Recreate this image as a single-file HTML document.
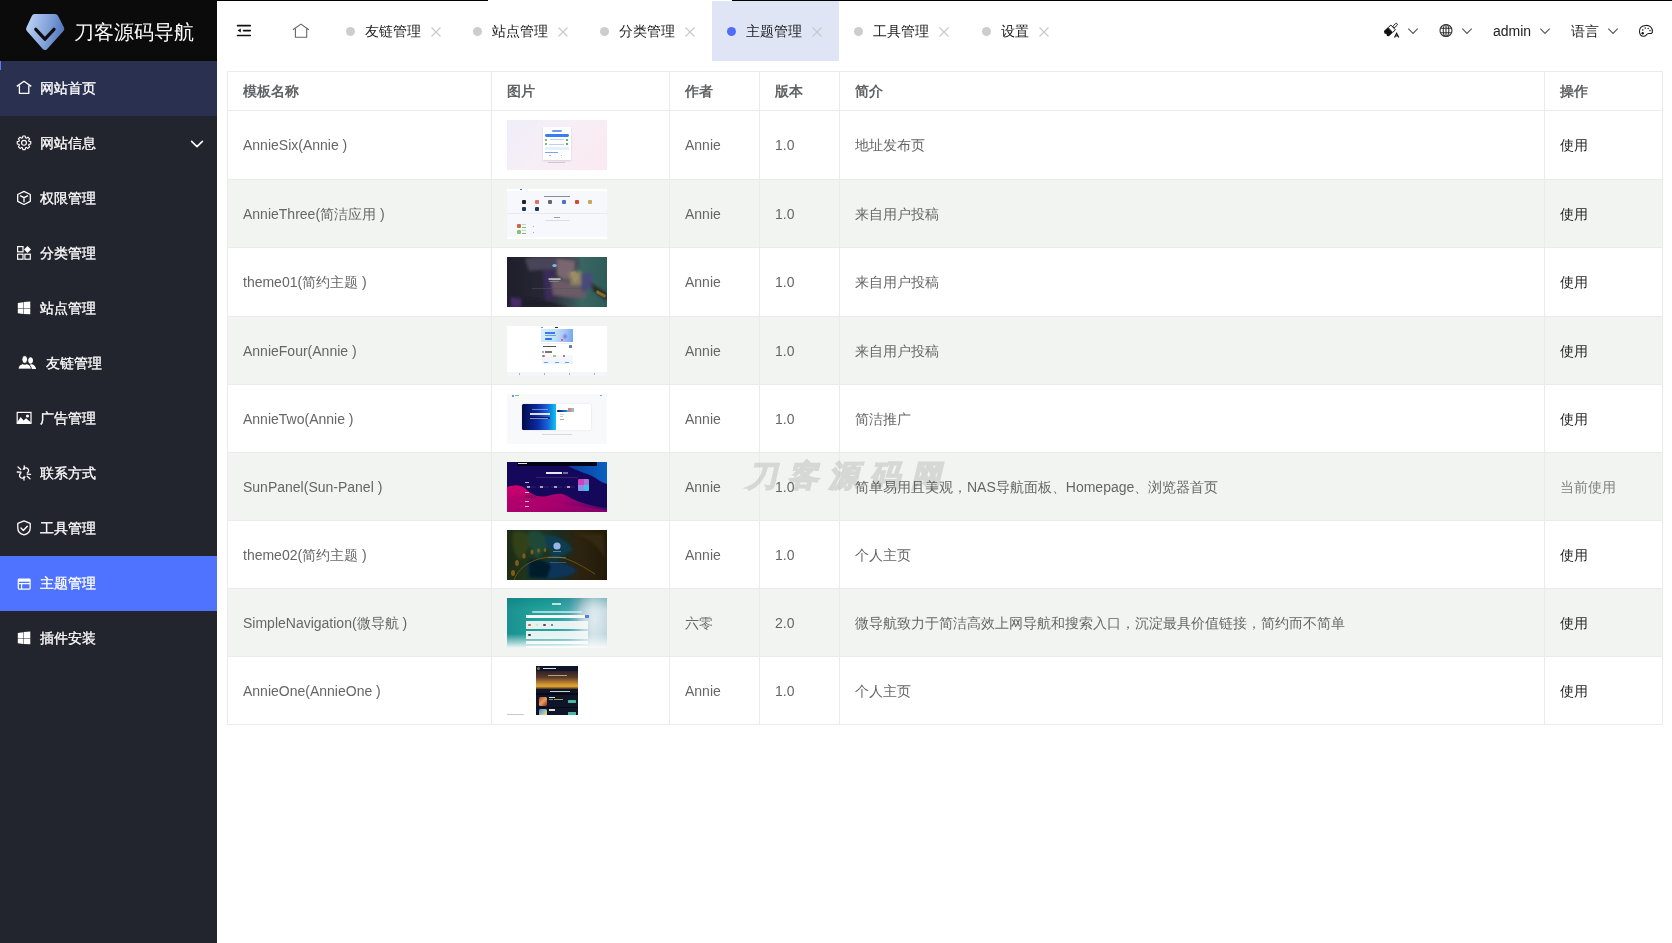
<!DOCTYPE html>
<html><head><meta charset="utf-8">
<style>
*{margin:0;padding:0;box-sizing:border-box}
html,body{width:1672px;height:943px;overflow:hidden;background:#fff;font-family:"Liberation Sans",sans-serif;}
#side{position:absolute;left:0;top:0;width:217px;height:943px;background:#22242e}
#logo{position:absolute;left:0;top:0;width:217px;height:61px;background:#0b0b0b}
#logo .t{position:absolute;left:74px;top:19px;font-size:20px;line-height:26px;color:#fff;white-space:nowrap}
.mi{position:absolute;left:0;width:217px;height:55px;color:#fff;font-size:14px;font-weight:normal;-webkit-text-stroke:0.3px #fff}
.mi .tx{position:absolute;left:40px;top:17px;line-height:20px;white-space:nowrap}
.mi svg{position:absolute;left:12px;top:15px}
.mi.cur{background:#2a3150}
.mi.act{background:#4f73fe}
#hdr{position:absolute;left:217px;top:0;width:1455px;height:61px;background:#fff}
.topline{position:absolute;top:0;height:1px;background:#000}
.tab{position:absolute;top:1px;height:60px;font-size:14px;color:#1a1a1a}
.tab .dot{position:absolute;left:15px;top:26px;width:9px;height:9px;border-radius:50%;background:#cdcdcd}
.tab .tx{position:absolute;left:34px;top:20px;line-height:20px;white-space:nowrap}
.tab .x{position:absolute;top:25px}
.tab.act{background:#dfe5f5}
.tab.act .dot{background:#4f6ef7}
.rt{position:absolute;top:21px;font-size:14px;color:#222;line-height:20px;white-space:nowrap}
table{position:absolute;left:227px;top:71px;border-collapse:collapse;table-layout:fixed;width:1436px}
td,th{border:1px solid #ebebeb;font-size:14px;color:#666;text-align:left;padding:24px 0 0 15px;white-space:nowrap;vertical-align:top;line-height:20px}
td.im{padding-top:9px}
th{vertical-align:middle;padding-top:0}
th{font-weight:bold;height:39px;color:#606266}
tr.s td{background:#f2f4f2}
.img{display:block;position:relative;overflow:hidden;width:100px;height:50px}
.img i{position:absolute;display:block}
#wm{position:absolute;left:745px;top:456px;font-size:30px;line-height:40px;font-weight:bold;color:#e2e2e2;-webkit-text-stroke:1.6px #e2e2e2;white-space:nowrap;letter-spacing:11px;transform:skewX(-13deg);transform-origin:0 100%;mix-blend-mode:multiply}
</style></head><body>
<div id="side">
  <div id="logo">
    <svg style="position:absolute;left:20px;top:8px" width="50" height="50" viewBox="0 0 50 50">
      <defs><linearGradient id="lg" gradientUnits="userSpaceOnUse" x1="6" y1="26" x2="44" y2="34"><stop offset="0" stop-color="#b6cef4"/><stop offset="0.5" stop-color="#84a3da"/><stop offset="1" stop-color="#4c70b8"/></linearGradient></defs>
      <path d="M14.6 9.2 H35.2 L41.2 20.9 L24.9 38.8 L9.2 20.9 Z" fill="url(#lg)" stroke="url(#lg)" stroke-linejoin="round" stroke-width="6.2"/>
      <path d="M15.8 21.3 L24.9 31.2 L34 21.3" fill="none" stroke="#0d0d0d" stroke-width="3.2" stroke-linecap="round" stroke-linejoin="round"/>
    </svg>
    <div class="t">刀客源码导航</div>
  </div>
  <div class="mi cur" style="top:61px"><div style="position:absolute;left:0;top:0;width:1px;height:9px;background:#5b7cff"></div>
    <svg width="24" height="24" viewBox="0 0 24 24"><path d="M4.8 10.4 L12 5.3 L19.3 10.4 M7.4 9.6 V17.3 H16.8 V9.6" fill="none" stroke="#fff" stroke-width="1.3" stroke-linejoin="round"/></svg>
    <div class="tx">网站首页</div></div>
  <div class="mi" style="top:116px">
    <svg width="24" height="24" viewBox="0 0 24 24"><g transform="translate(12 11.8) scale(0.93) translate(-12 -11.5)"><path d="M10.35 6.15 L10.75 4.21 L13.25 4.21 L13.65 6.15 L14.61 6.55 L16.27 5.46 L18.04 7.23 L16.95 8.89 L17.35 9.85 L19.29 10.25 L19.29 12.75 L17.35 13.15 L16.95 14.11 L18.04 15.77 L16.27 17.54 L14.61 16.45 L13.65 16.85 L13.25 18.79 L10.75 18.79 L10.35 16.85 L9.39 16.45 L7.73 17.54 L5.96 15.77 L7.05 14.11 L6.65 13.15 L4.71 12.75 L4.71 10.25 L6.65 9.85 L7.05 8.89 L5.96 7.23 L7.73 5.46 L9.39 6.55Z" fill="none" stroke="#fff" stroke-width="1.2" stroke-linejoin="round"/><circle cx="12" cy="11.5" r="2.6" fill="none" stroke="#fff" stroke-width="1.25"/></g></svg>
    <div class="tx">网站信息</div>
    <svg style="left:189px;top:22px" width="16" height="12" viewBox="0 0 16 12"><path d="M2.6 3.4 L8 8.6 L13.4 3.4" fill="none" stroke="#fff" stroke-width="1.6" stroke-linecap="round" stroke-linejoin="round"/></svg>
  </div>
  <div class="mi" style="top:171px">
    <svg width="24" height="24" viewBox="0 0 24 24"><path d="M12 5.3 L18.3 8.5 V15.3 L12 18.5 L5.7 15.3 V8.5 Z M8 9.6 L12 11.7 L16 9.6 M12 11.7 V16.3" fill="none" stroke="#fff" stroke-width="1.3" stroke-linejoin="round"/></svg>
    <div class="tx">权限管理</div></div>
  <div class="mi" style="top:226px">
    <svg width="24" height="24" viewBox="0 0 24 24"><g fill="none" stroke="#fff" stroke-width="1.2"><rect x="5.6" y="5.6" width="5.4" height="5.2"/><rect x="5.6" y="13.2" width="5.4" height="5"/><rect x="12.9" y="13.2" width="5.4" height="5"/></g><path d="M15.5 4.9 L19 8.4 L15.5 11.9 L12 8.4Z" fill="#fff"/></svg>
    <div class="tx">分类管理</div></div>
  <div class="mi" style="top:281px">
    <svg width="24" height="24" viewBox="0 0 24 24"><path d="M5.8 7 L11.3 6.2 V12.1 H5.8Z M11.8 6.1 L18.3 5.6 V12.1 H11.8Z M5.8 12.6 H11.3 V18 L5.8 17.3Z M11.8 12.6 H18.3 V18.3 L11.8 18.1Z" fill="#fff"/></svg>
    <div class="tx">站点管理</div></div>
  <div class="mi" style="top:336px">
    <svg width="28" height="24" viewBox="0 0 28 24"><path d="M18.6 6.3 C20 6.3 21 7.6 21 9.4 C21 11.3 20 12.7 18.6 12.7 C17.2 12.7 16.2 11.3 16.2 9.4 C16.2 7.6 17.2 6.3 18.6 6.3Z M15.8 18.1 C16 15.2 17.2 13.6 19 13.3 C21.8 13.4 23.6 14.8 24.1 18.1Z" fill="#fff"/><path d="M12.7 4.7 C14.4 4.7 15.5 6.3 15.5 8.4 C15.5 10.6 14.3 12.3 12.7 12.3 C11.1 12.3 9.9 10.6 9.9 8.4 C9.9 6.3 11 4.7 12.7 4.7Z M6 18.1 C6.3 14.9 8.3 13.3 10.6 12.7 C11.9 13.4 13.5 13.4 14.8 12.7 C17.1 13.3 19.1 14.9 19.4 18.1Z" fill="#fff" stroke="#22242e" stroke-width="0.9"/></svg>
    <div class="tx" style="left:46px">友链管理</div></div>
  <div class="mi" style="top:391px">
    <svg width="24" height="24" viewBox="0 0 24 24"><rect x="5.2" y="6.4" width="13.8" height="11" fill="none" stroke="#fff" stroke-width="1.2"/><path d="M5.2 16.3 L8.7 11 L11.6 14.5 L14 12.2 L19 16.5 V17.4 H5.2Z" fill="#fff"/><circle cx="15.5" cy="10" r="1.6" fill="#fff"/></svg>
    <div class="tx">广告管理</div></div>
  <div class="mi" style="top:446px">
    <svg width="24" height="24" viewBox="0 0 24 24"><g fill="none" stroke="#fff" stroke-width="1.3" stroke-linecap="round"><path d="M11.3 8.2 C12.2 6.7 14.6 6.4 15.8 7.6 C17 8.8 16.7 10.8 15.4 11.8 M12.8 15.8 C11.9 17.3 9.5 17.6 8.3 16.4 C7.1 15.2 7.4 13.2 8.7 12.2"/><path d="M6 6 L8.8 8.6 M5.2 11 L9 11.2 M12.2 4.8 L12.4 8 M18.6 13.3 L15.2 13.2 M18 17.8 L15.2 15.3 M12 19 L11.9 16"/></g></svg>
    <div class="tx">联系方式</div></div>
  <div class="mi" style="top:501px">
    <svg width="24" height="24" viewBox="0 0 24 24"><path d="M12 4.9 L18.2 7.3 V12 C18.2 15.6 15.4 18 12 18.8 C8.6 18 5.8 15.6 5.8 12 V7.3 Z" fill="none" stroke="#fff" stroke-width="1.3" stroke-linejoin="round"/><path d="M9 12.1 L11.3 14.4 L15.3 10.2" fill="none" stroke="#fff" stroke-width="1.4" stroke-linecap="round" stroke-linejoin="round"/></svg>
    <div class="tx">工具管理</div></div>
  <div class="mi act" style="top:556px">
    <svg width="24" height="24" viewBox="0 0 24 24"><rect x="6.3" y="8.1" width="11.8" height="10" rx="0.8" fill="none" stroke="#fff" stroke-width="1.2"/><rect x="6.3" y="8.1" width="11.8" height="2.6" fill="#fff"/><path d="M6.3 12.6 H18.1 M9.6 12.6 V18" fill="none" stroke="#fff" stroke-width="1.1"/></svg>
    <div class="tx">主题管理</div></div>
  <div class="mi" style="top:611px">
    <svg width="24" height="24" viewBox="0 0 24 24"><path d="M5.8 7 L11.3 6.2 V12.1 H5.8Z M11.8 6.1 L18.3 5.6 V12.1 H11.8Z M5.8 12.6 H11.3 V18 L5.8 17.3Z M11.8 12.6 H18.3 V18.3 L11.8 18.1Z" fill="#fff"/></svg>
    <div class="tx">插件安装</div></div>
</div>
<div class="topline" style="left:217px;width:271px"></div>
<div class="topline" style="left:732px;width:940px"></div>
<svg style="position:absolute;left:232px;top:19px" width="24" height="24" viewBox="0 0 24 24"><g stroke="#111" stroke-width="1.7" stroke-linecap="round"><path d="M5.6 6.6 H18.2 M11.6 11.6 H18.2 M5.6 16.5 H18.2"/></g><path d="M5.6 11.6 L8.8 9.6 V13.6Z" fill="#111"/></svg>
<svg style="position:absolute;left:288px;top:19px" width="24" height="24" viewBox="0 0 24 24"><path d="M4.9 10.7 L12.9 5.1 L20.9 10.7 M7.4 9.8 V18.3 H18.7 V9.8" fill="none" stroke="#666" stroke-width="1.1" stroke-linejoin="round"/></svg>
<div class="tab" style="left:331px;width:127px"><div class="dot"></div><div class="tx">友链管理</div><svg class="x" style="left:99px" width="12" height="12" viewBox="0 0 12 12"><path d="M1.5 1.5 L10.5 10.5 M10.5 1.5 L1.5 10.5" stroke="#c8c8c8" stroke-width="1.1"/></svg></div>
<div class="tab" style="left:458px;width:127px"><div class="dot"></div><div class="tx">站点管理</div><svg class="x" style="left:99px" width="12" height="12" viewBox="0 0 12 12"><path d="M1.5 1.5 L10.5 10.5 M10.5 1.5 L1.5 10.5" stroke="#c8c8c8" stroke-width="1.1"/></svg></div>
<div class="tab" style="left:585px;width:127px"><div class="dot"></div><div class="tx">分类管理</div><svg class="x" style="left:99px" width="12" height="12" viewBox="0 0 12 12"><path d="M1.5 1.5 L10.5 10.5 M10.5 1.5 L1.5 10.5" stroke="#c8c8c8" stroke-width="1.1"/></svg></div>
<div class="tab act" style="left:712px;width:127px"><div class="dot"></div><div class="tx">主题管理</div><svg class="x" style="left:99px" width="12" height="12" viewBox="0 0 12 12"><path d="M1.5 1.5 L10.5 10.5 M10.5 1.5 L1.5 10.5" stroke="#c8c8c8" stroke-width="1.1"/></svg></div>
<div class="tab" style="left:839px;width:127px"><div class="dot"></div><div class="tx">工具管理</div><svg class="x" style="left:99px" width="12" height="12" viewBox="0 0 12 12"><path d="M1.5 1.5 L10.5 10.5 M10.5 1.5 L1.5 10.5" stroke="#c8c8c8" stroke-width="1.1"/></svg></div>
<div class="tab" style="left:967px;width:127px"><div class="dot"></div><div class="tx">设置</div><svg class="x" style="left:71px" width="12" height="12" viewBox="0 0 12 12"><path d="M1.5 1.5 L10.5 10.5 M10.5 1.5 L1.5 10.5" stroke="#c8c8c8" stroke-width="1.1"/></svg></div>
<svg style="position:absolute;left:1380px;top:18px" width="24" height="24" viewBox="0 0 24 24"><g transform="translate(10.8 11.6) rotate(47)"><rect x="-1.1" y="-8.6" width="2.2" height="5.2" rx="1.1" fill="none" stroke="#111" stroke-width="0.9"/><rect x="-3.3" y="-3.2" width="6.6" height="3.8" fill="none" stroke="#111" stroke-width="0.9"/><path d="M-3.6 0.9 H3.6 V6 L2 7.2 L0.4 6.2 L-1.4 7.4 L-3.6 6Z" fill="#111"/></g><path d="M14.5 19.6 L16.6 15.2 L18.8 19.6 M15.3 18 H18" fill="none" stroke="#111" stroke-width="1.1"/></svg>
<svg style="position:absolute;left:1407px;top:26px" width="12" height="10" viewBox="0 0 12 10"><path d="M1.3 2.6 L6 7.4 L10.7 2.6" fill="none" stroke="#555" stroke-width="1.1"/></svg>
<svg style="position:absolute;left:1436px;top:21px" width="20" height="20" viewBox="0 0 20 20"><g fill="none" stroke="#333" stroke-width="1.1"><circle cx="10" cy="9.5" r="6"/><ellipse cx="10" cy="9.5" rx="2.8" ry="6"/><path d="M4.6 7.2 H15.4 M4.6 11.8 H15.4 M10 3.5 V15.5"/></g></svg>
<svg style="position:absolute;left:1461px;top:26px" width="12" height="10" viewBox="0 0 12 10"><path d="M1.3 2.6 L6 7.4 L10.7 2.6" fill="none" stroke="#555" stroke-width="1.1"/></svg>
<div class="rt" style="left:1493px">admin</div>
<svg style="position:absolute;left:1539px;top:26px" width="12" height="10" viewBox="0 0 12 10"><path d="M1.3 2.6 L6 7.4 L10.7 2.6" fill="none" stroke="#555" stroke-width="1.1"/></svg>
<div class="rt" style="left:1571px">语言</div>
<svg style="position:absolute;left:1607px;top:26px" width="12" height="10" viewBox="0 0 12 10"><path d="M1.3 2.6 L6 7.4 L10.7 2.6" fill="none" stroke="#555" stroke-width="1.1"/></svg>
<svg style="position:absolute;left:1634px;top:19px" width="24" height="24" viewBox="0 0 24 24"><path d="M11.8 6.4 C15.8 6.2 18.4 8.8 18.4 12.4 C18.4 14 17.8 14.5 16.4 14.5 L14.6 14.5 C13.4 14.5 12.8 15.4 12.2 16.2 C11.4 17.2 10.4 17.4 8.8 17.2 C6.6 16.8 5.5 14.6 5.5 12.2 C5.5 8.8 8.2 6.6 11.8 6.4Z" fill="none" stroke="#1a1a1a" stroke-width="1.05"/><circle cx="8.7" cy="14.2" r="1.2" fill="#111"/><circle cx="8.8" cy="10.9" r="0.8" fill="#333"/><circle cx="11.2" cy="9.1" r="0.8" fill="#333"/><circle cx="14.2" cy="9.5" r="0.8" fill="#333"/><circle cx="16" cy="11.6" r="0.8" fill="#333"/></svg>

<table>
<colgroup><col style="width:264px"><col style="width:178px"><col style="width:90px"><col style="width:80px"><col style="width:705px"><col style="width:118px"></colgroup>
<tr><th>模板名称</th><th>图片</th><th>作者</th><th>版本</th><th>简介</th><th>操作</th></tr>
<tr style="height:69px"><td>AnnieSix(Annie )</td><td class="im"><div class="img" style="background:linear-gradient(135deg,#eeeefa 0%,#f7eef6 45%,#fbe9f0 100%)"><i style="left:35.9px;top:7.3px;width:28.0px;height:32.4px;background:#fff;box-shadow:0 0.5px 2px rgba(120,120,160,0.25)"></i><i style="left:44.9px;top:10.0px;width:10.0px;height:2.0px;background:#6d9bf0;border-radius:1px"></i><i style="left:37.7px;top:13.8px;width:24.3px;height:2.8px;background:#3b7cf0;border-radius:1.4px"></i><i style="left:37.8px;top:19.0px;width:2.2px;height:1.6px;background:#7cc36a"></i><i style="left:43.0px;top:19.4px;width:14.0px;height:1.0px;background:#bcd0f4"></i><i style="left:58.6px;top:19.2px;width:2.4px;height:1.6px;background:#5cb85c"></i><i style="left:37.8px;top:23.2px;width:2.2px;height:1.6px;background:#7cc36a"></i><i style="left:42.0px;top:23.6px;width:15.0px;height:1.0px;background:#bcd0f4"></i><i style="left:58.6px;top:23.4px;width:2.4px;height:1.6px;background:#5cb85c"></i><i style="left:37.7px;top:26.9px;width:24.3px;height:2.8px;background:#e6f0fd"></i><i style="left:38.4px;top:32.0px;width:12.6px;height:0.9px;background:#7aa4ec"></i><i style="left:42.4px;top:34.8px;width:1.6px;height:1.6px;background:#9fd39a"></i><i style="left:53.5px;top:34.8px;width:1.6px;height:1.6px;background:#f0a090"></i><i style="left:41.0px;top:42.0px;width:17.0px;height:0.8px;background:#d0c8d0"></i></div></td><td>Annie</td><td>1.0</td><td>地址发布页</td><td style="color:#1e1e1e">使用</td></tr>
<tr class="s" style="height:68px"><td>AnnieThree(简洁应用 )</td><td class="im"><div class="img" style="background:#f7f8fc"><i style="left:0.0px;top:0.0px;width:100.0px;height:2.2px;background:#fff"></i><i style="left:12.5px;top:0.3px;width:2.5px;height:1.0px;background:#4a6ad0"></i><i style="left:37.0px;top:7.0px;width:26.0px;height:1.2px;background:#8a8c98"></i><i style="left:14.5px;top:10.6px;width:4.2px;height:4.2px;background:#222;border-radius:1px"></i><i style="left:27.9px;top:10.6px;width:4.2px;height:4.2px;background:#e07060;border-radius:1px"></i><i style="left:41.2px;top:10.6px;width:4.2px;height:4.2px;background:#5a6a78;border-radius:1px"></i><i style="left:54.5px;top:10.6px;width:4.2px;height:4.2px;background:#4a72c8;border-radius:1px"></i><i style="left:67.9px;top:10.6px;width:4.2px;height:4.2px;background:#d84838;border-radius:1px"></i><i style="left:81.2px;top:10.6px;width:4.2px;height:4.2px;background:#c8a860;border-radius:1px"></i><i style="left:14.5px;top:17.8px;width:4.2px;height:4.2px;background:#1a3a60;border-radius:1px"></i><i style="left:27.9px;top:17.8px;width:4.2px;height:4.2px;background:#1a3a60;border-radius:1px"></i><i style="left:0.0px;top:23.8px;width:100.0px;height:1.6px;background:#e8eaef"></i><i style="left:46.5px;top:27.6px;width:6.0px;height:1.2px;background:#9a9ca8"></i><i style="left:38.0px;top:31.0px;width:24.0px;height:0.9px;background:#dcdde4"></i><i style="left:10.0px;top:34.8px;width:4.0px;height:4.0px;background:#c86a40;border-radius:1px"></i><i style="left:15.0px;top:35.0px;width:3.5px;height:1.0px;background:#ccc"></i><i style="left:15.0px;top:37.6px;width:3.5px;height:0.8px;background:#6ac86a"></i><i style="left:25.5px;top:36.6px;width:1.6px;height:1.2px;background:#8ab8f0"></i><i style="left:10.0px;top:40.8px;width:4.0px;height:4.0px;background:#8ac070;border-radius:1px"></i><i style="left:15.0px;top:41.0px;width:3.5px;height:1.0px;background:#ccc"></i><i style="left:15.0px;top:43.6px;width:3.5px;height:0.8px;background:#6ac86a"></i><i style="left:25.5px;top:42.6px;width:1.6px;height:1.2px;background:#8ab8f0"></i><i style="left:0.0px;top:47.8px;width:100.0px;height:2.2px;background:#fff"></i></div></td><td>Annie</td><td>1.0</td><td>来自用户投稿</td><td style="color:#1e1e1e">使用</td></tr>
<tr style="height:69px"><td>theme01(简约主题 )</td><td class="im"><div class="img" style="background:#23232f"><svg style="position:absolute;left:0;top:0" width="100" height="50" viewBox="0 0 100 50"><defs><filter id="bl1" x="-20%" y="-20%" width="140%" height="140%"><feGaussianBlur stdDeviation="1.6"/></filter><filter id="bl2"><feGaussianBlur stdDeviation="0.6"/></filter><linearGradient id="t1g" x1="0" y1="0" x2="1" y2="0"><stop offset="0" stop-color="#1e1f2b"/><stop offset="0.35" stop-color="#272634"/><stop offset="0.62" stop-color="#3a4a50"/><stop offset="0.75" stop-color="#3a6662"/><stop offset="1" stop-color="#2e5c58"/></linearGradient></defs>
<rect width="100" height="50" fill="url(#t1g)"/>
<g filter="url(#bl1)">
<path d="M18 2 C28 -2 50 0 70 2 L72 10 C60 12 40 12 22 14Z" fill="#4a4558"/>
<path d="M50 2 L68 4 L66 22 C60 24 54 22 50 18Z" fill="#7a6670"/>
<path d="M36 14 L46 12 L49 40 L39 44Z" fill="#3a2c5c"/>
<path d="M44 22 C56 22 66 26 76 30 L80 40 C70 42 56 40 46 38Z" fill="#6c5a66"/>
<path d="M72 18 L84 15 L87 30 L75 35Z" fill="#48487a"/>
<path d="M62 15 L74 14 L74 28 L64 28Z" fill="#8e8460"/>
<path d="M84 26 L100 36 L100 44 L86 34Z" fill="#2a2a20"/>
<path d="M0 40 L40 44 L60 50 L0 50Z" fill="#1e1d2a"/>
<path d="M4 40 L14 42 L14 50 L4 50Z" fill="#4a2c6a"/>
</g>
<g filter="url(#bl2)" opacity="0.75"><path d="M63 16 L68 14 L72 20 L68 26Z" fill="#a09068"/><path d="M90 33 L99 38 L98 41 L89 36Z" fill="#a08030"/></g>
<ellipse cx="47.5" cy="8.5" rx="2.2" ry="1.6" fill="#88b0f0"/>
<rect x="41.5" y="21.4" width="12" height="1.3" fill="#e8e8e8"/>
<rect x="42" y="24.4" width="10" height="0.6" fill="#9a9aa0"/>
<rect x="25" y="31" width="50" height="0.5" fill="#555"/>
</svg></div></td><td>Annie</td><td>1.0</td><td>来自用户投稿</td><td style="color:#1e1e1e">使用</td></tr>
<tr class="s" style="height:68px"><td>AnnieFour(Annie )</td><td class="im"><div class="img" style="background:#fff"><i style="left:34.4px;top:0.6px;width:2.0px;height:1.6px;background:#5a7ae0;border-radius:50%"></i><i style="left:48.0px;top:1.0px;width:3.0px;height:0.9px;background:#333"></i><i style="left:34.4px;top:3.0px;width:31.4px;height:12.6px;background:linear-gradient(100deg,#d8f0fb 0%,#bfe0f8 45%,#a8c8f4 70%,#6aa4f0 100%)"></i><i style="left:37.5px;top:6.0px;width:10.5px;height:1.8px;background:#3a7ae8"></i><i style="left:37.5px;top:9.0px;width:11.0px;height:1.0px;background:#6aa0e8"></i><i style="left:37.5px;top:12.0px;width:7.8px;height:1.6px;background:#2f6fe6;border-radius:0.8px"></i><i style="left:55.0px;top:6.5px;width:6.0px;height:7.0px;background:radial-gradient(ellipse,#8a70e0,rgba(0,0,0,0) 70%)"></i><i style="left:53.8px;top:13.2px;width:2.0px;height:2.0px;background:#e04a40;border-radius:50%"></i><i style="left:34.4px;top:16.5px;width:31.4px;height:1.6px;background:#eef2f8"></i><i style="left:36.0px;top:20.0px;width:13.0px;height:1.4px;background:#555"></i><i style="left:62.0px;top:19.2px;width:2.6px;height:2.4px;background:#6a7aa8;border-radius:0.6px"></i><i style="left:34.8px;top:25.0px;width:2.0px;height:2.0px;background:#7ab6f0"></i><i style="left:37.5px;top:25.2px;width:7.0px;height:1.4px;background:#777"></i><i style="left:34.8px;top:28.5px;width:31.0px;height:9.5px;background:linear-gradient(180deg,#f6f8fd,#eef2fc)"></i><i style="left:35.4px;top:29.2px;width:2.2px;height:2.0px;background:#c86a50;border-radius:50%"></i><i style="left:46.0px;top:29.4px;width:2.8px;height:1.8px;background:#a8c880"></i><i style="left:56.0px;top:29.4px;width:2.4px;height:1.8px;background:#b87a6a"></i><i style="left:37.0px;top:36.0px;width:4.0px;height:1.4px;background:#4aa0f0;border-radius:0.7px"></i><i style="left:48.0px;top:35.6px;width:4.0px;height:1.4px;background:#4aa0f0;border-radius:0.7px"></i><i style="left:58.0px;top:35.9px;width:4.0px;height:1.4px;background:#4aa0f0;border-radius:0.7px"></i><i style="left:0.0px;top:46.0px;width:100.0px;height:4.0px;background:#f4f6fb"></i><i style="left:12.0px;top:46.8px;width:1.4px;height:2.4px;background:#a0b0d8"></i><i style="left:37.0px;top:46.8px;width:1.4px;height:2.4px;background:#a0b0d8"></i><i style="left:62.0px;top:46.8px;width:1.4px;height:2.4px;background:#a0b0d8"></i><i style="left:87.0px;top:46.8px;width:1.4px;height:2.4px;background:#a0b0d8"></i></div></td><td>Annie</td><td>1.0</td><td>来自用户投稿</td><td style="color:#1e1e1e">使用</td></tr>
<tr style="height:68px"><td>AnnieTwo(Annie )</td><td class="im"><div class="img" style="background:#f8f9fb"><i style="left:5.0px;top:0.8px;width:2.0px;height:1.8px;background:#4a6ad8;border-radius:50%"></i><i style="left:7.6px;top:1.2px;width:4.0px;height:1.0px;background:#6ac86a"></i><i style="left:93.0px;top:0.8px;width:1.6px;height:1.6px;background:#99a"></i><i style="left:14.9px;top:9.7px;width:69.6px;height:26.2px;background:#fff;border-radius:1.5px;box-shadow:0 0 2px rgba(140,150,200,0.3)"></i><i style="left:14.9px;top:9.7px;width:33.8px;height:26.2px;background:linear-gradient(90deg,#030a48 0%,#0a2aa0 45%,#1a60d8 75%,#08c8f0 100%);border-radius:1.5px 0 0 1.5px"></i><i style="left:24.5px;top:15.0px;width:16.0px;height:1.0px;background:rgba(220,230,255,0.5)"></i><i style="left:22.5px;top:18.8px;width:20.0px;height:2.0px;background:rgba(255,255,255,0.85)"></i><i style="left:22.0px;top:23.0px;width:21.0px;height:2.2px;background:rgba(5,10,60,0.7);border-radius:1px"></i><i style="left:23.0px;top:23.7px;width:18.0px;height:0.8px;background:rgba(220,230,255,0.6)"></i><i style="left:50.0px;top:16.3px;width:10.5px;height:1.8px;background:linear-gradient(90deg,#0a1060,#20a0f0);border-radius:0.9px"></i><i style="left:61.0px;top:14.4px;width:2.8px;height:3.8px;background:#d08a70"></i><i style="left:64.3px;top:14.4px;width:2.8px;height:3.8px;background:#9ab8c0"></i><i style="left:53.0px;top:19.6px;width:4.0px;height:0.6px;background:#ccc"></i><i style="left:53.0px;top:22.0px;width:3.0px;height:0.6px;background:#ccc"></i><i style="left:53.0px;top:24.6px;width:4.0px;height:0.6px;background:#aaa"></i><i style="left:35.0px;top:39.6px;width:30.0px;height:0.7px;background:#d8d8dc"></i></div></td><td>Annie</td><td>1.0</td><td>简洁推广</td><td style="color:#1e1e1e">使用</td></tr>
<tr class="s" style="height:68px"><td>SunPanel(Sun-Panel )</td><td class="im"><div class="img" style="background:#15085a"><svg style="position:absolute;left:0;top:0" width="100" height="50" viewBox="0 0 100 50"><defs><linearGradient id="sp1" x1="0" y1="0" x2="1" y2="1"><stop offset="0" stop-color="#d0006c"/><stop offset="0.6" stop-color="#a00070"/><stop offset="1" stop-color="#3a0868"/></linearGradient><linearGradient id="sp2" x1="0" y1="0" x2="1" y2="0"><stop offset="0" stop-color="#0a3aa0"/><stop offset="1" stop-color="#0a60c0"/></linearGradient></defs><path d="M58 3 C64 5 70 9 80 12 C88 14 92 20 100 22 V0 H60Z" fill="url(#sp2)"/><path d="M0 25 C6 23 12 22 18 26 C24 32 30 36 40 34 C48 32 54 30 60 34 C70 40 84 44 100 46 V50 H0Z" fill="url(#sp1)"/><path d="M0 35 C10 33 20 34 32 38 C50 42 70 44 100 48 V50 H0Z" fill="#b0006a" opacity="0.6"/></svg><i style="left:10.0px;top:0.0px;width:80.0px;height:3.8px;background:#030318"></i><i style="left:11.0px;top:1.2px;width:9.0px;height:1.0px;background:#ddd"></i><i style="left:38.5px;top:9.6px;width:16.5px;height:2.4px;background:rgba(255,255,255,0.9)"></i><i style="left:56.0px;top:10.0px;width:4.5px;height:1.8px;background:rgba(255,255,255,0.4)"></i><i style="left:29.0px;top:14.6px;width:42.0px;height:1.2px;background:rgba(60,40,110,0.8)"></i><i style="left:71.0px;top:17.4px;width:5.6px;height:5.8px;background:#d040c0;border-radius:1px 0 0 0"></i><i style="left:76.8px;top:17.4px;width:5.6px;height:5.8px;background:#a878d8;border-radius:0 1px 0 0"></i><i style="left:71.0px;top:23.4px;width:5.6px;height:5.8px;background:#8890e8;border-radius:0 0 0 1px"></i><i style="left:76.8px;top:23.4px;width:5.6px;height:5.8px;background:#40c0e8;border-radius:0 0 1px 0"></i><i style="left:17.5px;top:23.6px;width:11.0px;height:2.6px;background:rgba(40,30,90,0.7)"></i><i style="left:20.0px;top:24.2px;width:3.0px;height:1.4px;background:rgba(255,255,255,0.6)"></i><i style="left:30.8px;top:23.6px;width:11.0px;height:2.6px;background:rgba(40,30,90,0.7)"></i><i style="left:33.3px;top:24.2px;width:3.0px;height:1.4px;background:rgba(255,255,255,0.6)"></i><i style="left:44.1px;top:23.6px;width:11.0px;height:2.6px;background:rgba(40,30,90,0.7)"></i><i style="left:46.6px;top:24.2px;width:3.0px;height:1.4px;background:rgba(255,255,255,0.6)"></i><i style="left:57.4px;top:23.6px;width:11.0px;height:2.6px;background:rgba(40,30,90,0.7)"></i><i style="left:59.9px;top:24.2px;width:3.0px;height:1.4px;background:rgba(255,255,255,0.6)"></i><i style="left:17.5px;top:20.0px;width:4.0px;height:1.2px;background:rgba(255,255,255,0.7)"></i><i style="left:17.5px;top:29.5px;width:4.0px;height:1.2px;background:rgba(255,255,255,0.7)"></i><i style="left:17.5px;top:33.2px;width:11.0px;height:2.4px;background:rgba(120,20,90,0.7)"></i><i style="left:17.5px;top:38.5px;width:4.0px;height:1.2px;background:rgba(255,255,255,0.7)"></i><i style="left:17.5px;top:44.0px;width:4.0px;height:1.2px;background:rgba(255,255,255,0.7)"></i></div></td><td>Annie</td><td>1.0</td><td>简单易用且美观，NAS导航面板、Homepage、浏览器首页</td><td style="color:#808080">当前使用</td></tr>
<tr style="height:68px"><td>theme02(简约主题 )</td><td class="im"><div class="img" style="background:#1c2410"><svg style="position:absolute;left:0;top:0" width="100" height="50" viewBox="0 0 100 50"><defs><filter id="bl3" x="-20%" y="-20%" width="140%" height="140%"><feGaussianBlur stdDeviation="1.8"/></filter><linearGradient id="t2g" x1="0" y1="0" x2="1" y2="0"><stop offset="0" stop-color="#1e2c14"/><stop offset="0.3" stop-color="#203a22"/><stop offset="0.5" stop-color="#1a2c20"/><stop offset="0.7" stop-color="#2c2410"/><stop offset="1" stop-color="#241a08"/></linearGradient></defs>
<rect width="100" height="50" fill="url(#t2g)"/>
<g filter="url(#bl3)">
<path d="M6 2 C12 0 20 2 26 10 L14 30 C8 26 4 16 6 2Z" fill="#3a4418" opacity="0.8"/>
<path d="M22 2 C30 0 40 4 44 14 L30 28 C24 20 20 12 22 2Z" fill="#1e4a3a" opacity="0.9"/>
<path d="M38 6 C48 4 60 10 66 20 L48 30 C42 22 38 14 38 6Z" fill="#0e3c50"/>
<path d="M20 34 C36 28 56 30 70 40 C66 48 40 50 22 48Z" fill="#08345a"/>
<path d="M22 30 C30 28 40 30 44 36 L40 48 L22 48Z" fill="#061c2a"/>
<path d="M62 4 C74 4 90 12 98 28 L96 4Z" fill="#3a2a0c" opacity="0.8"/>
</g>
<path d="M7 50 C10 42 16 36 24 32 C32 28 40 27 48 27 C60 27 72 34 88 44" fill="none" stroke="#7a5a14" stroke-width="0.8"/>
<g fill="#8e6418" opacity="0.85"><ellipse cx="6" cy="43" rx="2" ry="3"/><ellipse cx="10" cy="33" rx="1.9" ry="3"/><ellipse cx="17" cy="26" rx="1.7" ry="2.7"/><ellipse cx="25" cy="22" rx="1.6" ry="2.5"/><ellipse cx="31.5" cy="20.5" rx="1.4" ry="2.2"/><ellipse cx="38" cy="20" rx="1.3" ry="2"/></g>
<circle cx="50" cy="16" r="3.6" fill="#9ab4ea"/>
<rect x="46" y="21.2" width="8" height="0.8" fill="#b0b8c0" opacity="0.7"/>
<rect x="41" y="27" width="18" height="0.8" fill="#a0a8b0" opacity="0.6"/>
<rect x="43" y="32" width="16" height="0.8" fill="#8090a0" opacity="0.5"/>
</svg></div></td><td>Annie</td><td>1.0</td><td>个人主页</td><td style="color:#1e1e1e">使用</td></tr>
<tr class="s" style="height:68px"><td>SimpleNavigation(微导航 )</td><td class="im"><div class="img" style="background:linear-gradient(90deg,#1a9090 0%,#22a29a 30%,#2aa6a0 50%,#48a8b0 62%,#9cc4cc 74%,#c8dce0 86%,#b8d0d8 100%)"><i style="left:0.0px;top:0.0px;width:100.0px;height:12.0px;background:linear-gradient(180deg,rgba(0,110,120,0.35),rgba(0,0,0,0))"></i><i style="left:70.0px;top:0.0px;width:30.0px;height:50.0px;background:radial-gradient(ellipse at 60% 40%,rgba(230,240,245,0.75),rgba(0,0,0,0) 75%)"></i><i style="left:0.0px;top:36.0px;width:100.0px;height:14.0px;background:linear-gradient(180deg,rgba(255,255,255,0),rgba(250,252,252,0.95))"></i><i style="left:45.0px;top:5.2px;width:9.0px;height:1.4px;background:rgba(255,255,255,0.7)"></i><i style="left:25.0px;top:13.4px;width:50.0px;height:1.6px;background:rgba(220,240,245,0.7);border-radius:0.8px"></i><i style="left:19.0px;top:17.4px;width:58.5px;height:2.5px;background:#f4f8f8"></i><i style="left:77.5px;top:17.4px;width:4.0px;height:2.5px;background:#5a78e8"></i><i style="left:19.0px;top:23.2px;width:62.0px;height:8.0px;background:rgba(245,248,248,0.92)"></i><i style="left:21.4px;top:25.8px;width:2.6px;height:2.6px;background:#c86a40;border-radius:50%"></i><i style="left:28.8px;top:25.8px;width:2.6px;height:2.6px;background:#e0d8b0;border-radius:50%"></i><i style="left:36.2px;top:25.8px;width:2.6px;height:2.6px;background:#704040;border-radius:50%"></i><i style="left:43.6px;top:25.8px;width:2.6px;height:2.6px;background:#506080;border-radius:50%"></i><i style="left:19.0px;top:33.0px;width:62.0px;height:8.0px;background:rgba(245,248,248,0.92)"></i><i style="left:21.4px;top:35.6px;width:2.8px;height:2.8px;background:#403a40;border-radius:50%"></i><i style="left:19.0px;top:42.7px;width:62.0px;height:3.0px;background:rgba(250,252,252,0.95)"></i><i style="left:19.0px;top:47.7px;width:62.0px;height:2.3px;background:rgba(250,252,252,0.95)"></i></div></td><td>六零</td><td>2.0</td><td>微导航致力于简洁高效上网导航和搜索入口，沉淀最具价值链接，简约而不简单</td><td style="color:#1e1e1e">使用</td></tr>
<tr style="height:68px"><td>AnnieOne(AnnieOne )</td><td class="im"><div class="img" style="background:#fff"><i style="left:28.9px;top:0.0px;width:42.1px;height:49.0px;background:#0f1528"></i><i style="left:28.9px;top:5.1px;width:42.1px;height:18.0px;background:linear-gradient(180deg,#2e2028 0%,#5a3a28 35%,#c88a30 70%,#e0a838 85%,#4a3018 100%)"></i><i style="left:30.0px;top:1.0px;width:3.0px;height:3.0px;background:#8a7040;border-radius:50%"></i><i style="left:35.8px;top:2.0px;width:13.6px;height:1.4px;background:#ddd"></i><i style="left:40.5px;top:8.6px;width:19.6px;height:1.8px;background:rgba(255,230,200,0.6)"></i><i style="left:43.0px;top:24.6px;width:20.0px;height:1.2px;background:#ccc"></i><i style="left:28.9px;top:27.0px;width:42.1px;height:1.5px;background:#050a18"></i><i style="left:31.5px;top:30.5px;width:8.6px;height:9.0px;background:linear-gradient(135deg,#c04020,#e8a060,#a02010);border-radius:1.5px"></i><i style="left:41.8px;top:30.8px;width:6.5px;height:1.4px;background:#ddd"></i><i style="left:41.8px;top:33.0px;width:4.0px;height:0.8px;background:#888"></i><i style="left:47.0px;top:33.0px;width:9.0px;height:0.8px;background:#a8a040"></i><i style="left:60.5px;top:33.6px;width:8.3px;height:3.0px;background:#4ab8a0;border-radius:0.6px"></i><i style="left:28.9px;top:41.3px;width:42.1px;height:1.2px;background:#050a18"></i><i style="left:31.5px;top:43.2px;width:8.6px;height:6.0px;background:linear-gradient(135deg,#4a8ae0,#f0e080);border-radius:1.5px 1.5px 0 0"></i><i style="left:41.8px;top:43.2px;width:6.5px;height:1.4px;background:#ddd"></i><i style="left:60.5px;top:46.0px;width:8.3px;height:3.0px;background:#4ab8a0"></i><i style="left:0.0px;top:47.8px;width:16.7px;height:0.8px;background:#c8c8d8"></i></div></td><td>Annie</td><td>1.0</td><td>个人主页</td><td style="color:#1e1e1e">使用</td></tr>
</table>
<div id="wm">刀客源码网</div>
</body></html>
